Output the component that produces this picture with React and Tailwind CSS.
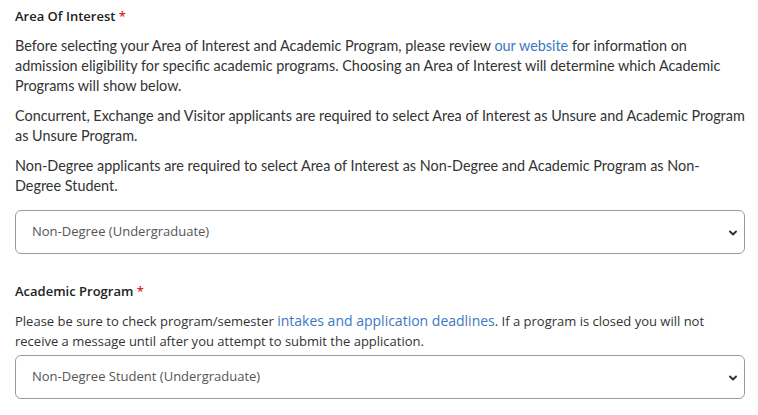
import { ChevronDown } from 'lucide-react';

const openSans = "font-['Open_Sans',sans-serif]";
const bodyFont = "font-['Lato',sans-serif]";

function Label({ children }) {
  return (
    <div className={`${openSans} text-[13px] font-semibold text-[#222] leading-[20px]`}>
      {children} <span className="text-[#d9262b]">*</span>
    </div>
  );
}

function Select({ value }) {
  return (
    <div className="relative w-[730px] h-[44px] border border-[#9a9a9a] rounded-[6px] bg-white flex items-center">
      <span className={`${openSans} text-[13px] text-[#555] pl-[16px]`}>{value}</span>
      <ChevronDown className="absolute right-[5px] top-[16px] w-[12px] h-[12px] text-[#333]" strokeWidth={4} />
    </div>
  );
}

export default function App() {
  return (
    <div className="w-[758px] h-[415px] bg-white px-[15px] pt-[6px] overflow-hidden">
      <Label>Area Of Interest</Label>
      <div className={`${bodyFont} text-[14.4px] text-[#333] leading-[20px] mt-[10px] flex flex-col gap-[10px] w-[735px]`}>
        <p>
          Before selecting your Area of Interest and Academic Program, please review{' '}
          <a className="text-[#3b78c4]">our website</a> for information on admission eligibility
          for specific academic programs. Choosing an Area of Interest will determine which
          Academic Programs will show below.
        </p>
        <p>
          Concurrent, Exchange and Visitor applicants are required to select Area of Interest as
          Unsure and Academic Program as Unsure Program.
        </p>
        <p className="w-[715px]">
          Non-Degree applicants are required to select Area of Interest as Non-Degree and Academic
          Program as Non-Degree Student.
        </p>
      </div>
      <div className="mt-[14px]">
        <Select value="Non-Degree (Undergraduate)" />
      </div>
      <div className="mt-[27px]">
        <Label>Academic Program</Label>
      </div>
      <p className={`${openSans} text-[13px] text-[#333] leading-[20px] mt-[10px] w-[730px]`}>
        Please be sure to check program/semester{' '}
        <a className="text-[#3b78c4] text-[14px]">intakes and application deadlines</a>. If a
        program is closed you will not receive a message until after you attempt to submit the
        application.
      </p>
      <div className="mt-[4px]">
        <Select value="Non-Degree Student (Undergraduate)" />
      </div>
    </div>
  );
}
